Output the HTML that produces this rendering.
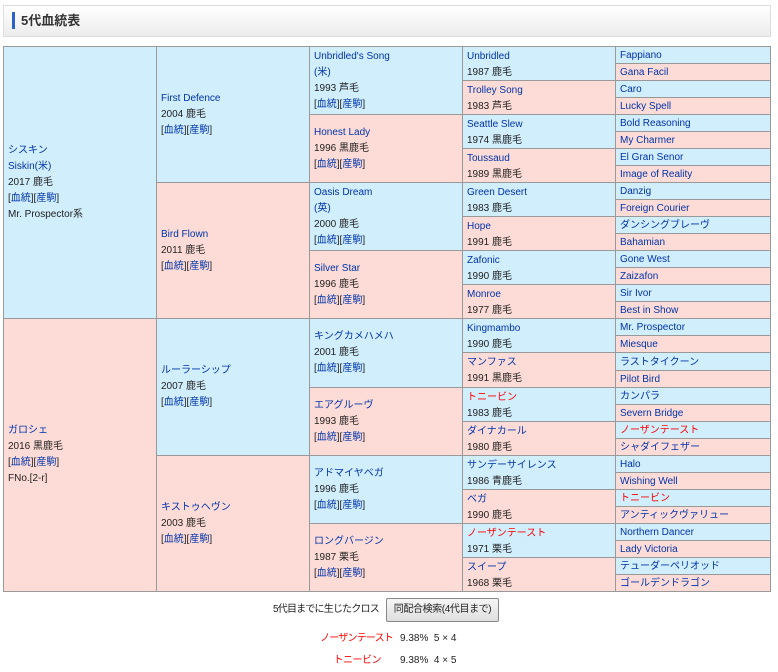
<!DOCTYPE html>
<html><head><meta charset="utf-8">
<style>
*{margin:0;padding:0;box-sizing:border-box}
body{width:778px;height:672px;background:#fff;font-family:"Liberation Sans","Noto Sans CJK JP",sans-serif;font-size:10px;color:#222;position:relative;overflow:hidden}
.hd{position:absolute;left:3px;top:5px;width:768px;height:32px;border:1px solid #ddd;background:linear-gradient(#fff,#ececec)}
.bar{position:absolute;left:8px;top:6px;width:3px;height:17px;background:#2a62c8}
.hd h1{position:absolute;left:17px;top:6px;font-size:13px;font-weight:bold;color:#333;line-height:17px}
.c{position:absolute;border:1px solid #999;display:flex;flex-direction:column;justify-content:center;padding-left:4px;line-height:16px;white-space:nowrap}
.b{background:#d0eefc}.p{background:#fddcd7}
a,.a{color:#0033aa;text-decoration:none}
.r{color:#f00}
.g4{line-height:16px;padding-top:2px}
.g5{line-height:15px;padding-top:1px}
.btn{position:absolute;left:386px;top:598px;width:113px;height:24px;border:1px solid #888;background:linear-gradient(#f6f6f6,#dedede);border-radius:2px;font-size:10px;line-height:22px;text-align:center;color:#222;letter-spacing:-0.4px}
.t{position:absolute;font-size:10px;line-height:14px;white-space:nowrap}
</style></head><body>
<div class="hd"><div class="bar"></div><h1>5代血統表</h1></div>

<div class="c b" style="left:3px;top:46px;width:154px;height:273px"><span class="a">シスキン</span><span class="a">Siskin(米)</span><span>2017 鹿毛</span><span>[<a>血統</a>][<a>産駒</a>]</span><span>Mr. Prospector系</span></div>
<div class="c p" style="left:3px;top:318px;width:154px;height:274px"><span class="a">ガロシェ</span><span>2016 黒鹿毛</span><span>[<a>血統</a>][<a>産駒</a>]</span><span>FNo.[2-r]</span></div>

<div class="c b" style="left:156px;top:46px;width:154px;height:137px"><span class="a">First Defence</span><span>2004 鹿毛</span><span>[<a>血統</a>][<a>産駒</a>]</span></div>
<div class="c p" style="left:156px;top:182px;width:154px;height:137px"><span class="a">Bird Flown</span><span>2011 鹿毛</span><span>[<a>血統</a>][<a>産駒</a>]</span></div>
<div class="c b" style="left:156px;top:318px;width:154px;height:138px"><span class="a">ルーラーシップ</span><span>2007 鹿毛</span><span>[<a>血統</a>][<a>産駒</a>]</span></div>
<div class="c p" style="left:156px;top:455px;width:154px;height:137px"><span class="a">キストゥヘヴン</span><span>2003 鹿毛</span><span>[<a>血統</a>][<a>産駒</a>]</span></div>

<div class="c b" style="left:309px;top:46px;width:154px;height:69px"><span class="a">Unbridled's Song</span><span class="a">(米)</span><span>1993 芦毛</span><span>[<a>血統</a>][<a>産駒</a>]</span></div>
<div class="c p" style="left:309px;top:114px;width:154px;height:69px"><span class="a">Honest Lady</span><span>1996 黒鹿毛</span><span>[<a>血統</a>][<a>産駒</a>]</span></div>
<div class="c b" style="left:309px;top:182px;width:154px;height:69px"><span class="a">Oasis Dream</span><span class="a">(英)</span><span>2000 鹿毛</span><span>[<a>血統</a>][<a>産駒</a>]</span></div>
<div class="c p" style="left:309px;top:250px;width:154px;height:69px"><span class="a">Silver Star</span><span>1996 鹿毛</span><span>[<a>血統</a>][<a>産駒</a>]</span></div>
<div class="c b" style="left:309px;top:318px;width:154px;height:70px"><span class="a">キングカメハメハ</span><span>2001 鹿毛</span><span>[<a>血統</a>][<a>産駒</a>]</span></div>
<div class="c p" style="left:309px;top:387px;width:154px;height:69px"><span class="a">エアグルーヴ</span><span>1993 鹿毛</span><span>[<a>血統</a>][<a>産駒</a>]</span></div>
<div class="c b" style="left:309px;top:455px;width:154px;height:69px"><span class="a">アドマイヤベガ</span><span>1996 鹿毛</span><span>[<a>血統</a>][<a>産駒</a>]</span></div>
<div class="c p" style="left:309px;top:523px;width:154px;height:69px"><span class="a">ロングバージン</span><span>1987 栗毛</span><span>[<a>血統</a>][<a>産駒</a>]</span></div>

<div class="c g4 b" style="left:462px;top:46px;width:154px;height:35px"><span class="a">Unbridled</span><span>1987 鹿毛</span></div>
<div class="c g4 p" style="left:462px;top:80px;width:154px;height:35px"><span class="a">Trolley Song</span><span>1983 芦毛</span></div>
<div class="c g4 b" style="left:462px;top:114px;width:154px;height:35px"><span class="a">Seattle Slew</span><span>1974 黒鹿毛</span></div>
<div class="c g4 p" style="left:462px;top:148px;width:154px;height:35px"><span class="a">Toussaud</span><span>1989 黒鹿毛</span></div>
<div class="c g4 b" style="left:462px;top:182px;width:154px;height:35px"><span class="a">Green Desert</span><span>1983 鹿毛</span></div>
<div class="c g4 p" style="left:462px;top:216px;width:154px;height:35px"><span class="a">Hope</span><span>1991 鹿毛</span></div>
<div class="c g4 b" style="left:462px;top:250px;width:154px;height:35px"><span class="a">Zafonic</span><span>1990 鹿毛</span></div>
<div class="c g4 p" style="left:462px;top:284px;width:154px;height:35px"><span class="a">Monroe</span><span>1977 鹿毛</span></div>
<div class="c g4 b" style="left:462px;top:318px;width:154px;height:35px"><span class="a">Kingmambo</span><span>1990 鹿毛</span></div>
<div class="c g4 p" style="left:462px;top:352px;width:154px;height:36px"><span class="a">マンファス</span><span>1991 黒鹿毛</span></div>
<div class="c g4 b" style="left:462px;top:387px;width:154px;height:35px"><span class="r">トニービン</span><span>1983 鹿毛</span></div>
<div class="c g4 p" style="left:462px;top:421px;width:154px;height:35px"><span class="a">ダイナカール</span><span>1980 鹿毛</span></div>
<div class="c g4 b" style="left:462px;top:455px;width:154px;height:35px"><span class="a">サンデーサイレンス</span><span>1986 青鹿毛</span></div>
<div class="c g4 p" style="left:462px;top:489px;width:154px;height:35px"><span class="a">ベガ</span><span>1990 鹿毛</span></div>
<div class="c g4 b" style="left:462px;top:523px;width:154px;height:35px"><span class="r">ノーザンテースト</span><span>1971 栗毛</span></div>
<div class="c g4 p" style="left:462px;top:557px;width:154px;height:35px"><span class="a">スイープ</span><span>1968 栗毛</span></div>

<div class="c g5 b" style="left:615px;top:46px;width:156px;height:18px"><span class="a">Fappiano</span></div>
<div class="c g5 p" style="left:615px;top:63px;width:156px;height:18px"><span class="a">Gana Facil</span></div>
<div class="c g5 b" style="left:615px;top:80px;width:156px;height:18px"><span class="a">Caro</span></div>
<div class="c g5 p" style="left:615px;top:97px;width:156px;height:18px"><span class="a">Lucky Spell</span></div>
<div class="c g5 b" style="left:615px;top:114px;width:156px;height:18px"><span class="a">Bold Reasoning</span></div>
<div class="c g5 p" style="left:615px;top:131px;width:156px;height:18px"><span class="a">My Charmer</span></div>
<div class="c g5 b" style="left:615px;top:148px;width:156px;height:18px"><span class="a">El Gran Senor</span></div>
<div class="c g5 p" style="left:615px;top:165px;width:156px;height:18px"><span class="a">Image of Reality</span></div>
<div class="c g5 b" style="left:615px;top:182px;width:156px;height:18px"><span class="a">Danzig</span></div>
<div class="c g5 p" style="left:615px;top:199px;width:156px;height:18px"><span class="a">Foreign Courier</span></div>
<div class="c g5 b" style="left:615px;top:216px;width:156px;height:18px"><span class="a">ダンシングブレーヴ</span></div>
<div class="c g5 p" style="left:615px;top:233px;width:156px;height:18px"><span class="a">Bahamian</span></div>
<div class="c g5 b" style="left:615px;top:250px;width:156px;height:18px"><span class="a">Gone West</span></div>
<div class="c g5 p" style="left:615px;top:267px;width:156px;height:18px"><span class="a">Zaizafon</span></div>
<div class="c g5 b" style="left:615px;top:284px;width:156px;height:18px"><span class="a">Sir Ivor</span></div>
<div class="c g5 p" style="left:615px;top:301px;width:156px;height:18px"><span class="a">Best in Show</span></div>
<div class="c g5 b" style="left:615px;top:318px;width:156px;height:18px"><span class="a">Mr. Prospector</span></div>
<div class="c g5 p" style="left:615px;top:335px;width:156px;height:18px"><span class="a">Miesque</span></div>
<div class="c g5 b" style="left:615px;top:352px;width:156px;height:19px"><span class="a">ラストタイクーン</span></div>
<div class="c g5 p" style="left:615px;top:370px;width:156px;height:18px"><span class="a">Pilot Bird</span></div>
<div class="c g5 b" style="left:615px;top:387px;width:156px;height:18px"><span class="a">カンパラ</span></div>
<div class="c g5 p" style="left:615px;top:404px;width:156px;height:18px"><span class="a">Severn Bridge</span></div>
<div class="c g5 b" style="left:615px;top:421px;width:156px;height:18px"><span class="r">ノーザンテースト</span></div>
<div class="c g5 p" style="left:615px;top:438px;width:156px;height:18px"><span class="a">シャダイフェザー</span></div>
<div class="c g5 b" style="left:615px;top:455px;width:156px;height:18px"><span class="a">Halo</span></div>
<div class="c g5 p" style="left:615px;top:472px;width:156px;height:18px"><span class="a">Wishing Well</span></div>
<div class="c g5 b" style="left:615px;top:489px;width:156px;height:18px"><span class="r">トニービン</span></div>
<div class="c g5 p" style="left:615px;top:506px;width:156px;height:18px"><span class="a">アンティックヴァリュー</span></div>
<div class="c g5 b" style="left:615px;top:523px;width:156px;height:18px"><span class="a">Northern Dancer</span></div>
<div class="c g5 p" style="left:615px;top:540px;width:156px;height:18px"><span class="a">Lady Victoria</span></div>
<div class="c g5 b" style="left:615px;top:557px;width:156px;height:18px"><span class="a">テューダーペリオッド</span></div>
<div class="c g5 p" style="left:615px;top:574px;width:156px;height:18px"><span class="a">ゴールデンドラゴン</span></div>

<div class="t" style="left:273px;top:603px;letter-spacing:-0.8px">5代目までに生じたクロス</div>
<div class="btn">同配合検索(4代目まで)</div>
<div class="t r" style="left:293px;width:100px;text-align:right;top:632px;letter-spacing:-0.8px">ノーザンテースト</div>
<div class="t" style="left:400px;top:632px">9.38%&nbsp; 5 × 4</div>
<div class="t r" style="left:293px;width:88px;text-align:right;top:654px;letter-spacing:-0.5px">トニービン</div>
<div class="t" style="left:400px;top:654px">9.38%&nbsp; 4 × 5</div>
</body></html>
